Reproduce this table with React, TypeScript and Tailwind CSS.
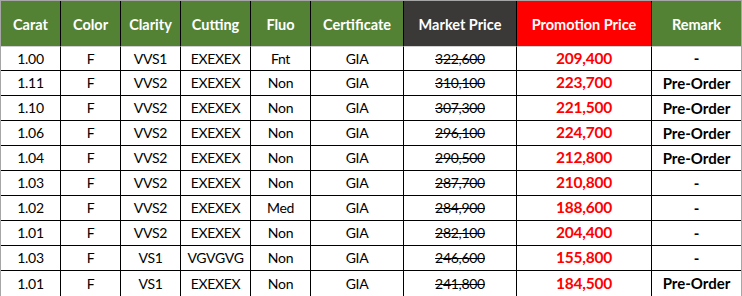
import React from "react";

const rows = [
  ["1.00", "F", "VVS1", "EXEXEX", "Fnt", "GIA", "322,600", "209,400", "-"],
  ["1.11", "F", "VVS2", "EXEXEX", "Non", "GIA", "310,100", "223,700", "Pre-Order"],
  ["1.10", "F", "VVS2", "EXEXEX", "Non", "GIA", "307,300", "221,500", "Pre-Order"],
  ["1.06", "F", "VVS2", "EXEXEX", "Non", "GIA", "296,100", "224,700", "Pre-Order"],
  ["1.04", "F", "VVS2", "EXEXEX", "Non", "GIA", "290,500", "212,800", "Pre-Order"],
  ["1.03", "F", "VVS2", "EXEXEX", "Non", "GIA", "287,700", "210,800", "-"],
  ["1.02", "F", "VVS2", "EXEXEX", "Med", "GIA", "284,900", "188,600", "-"],
  ["1.01", "F", "VVS2", "EXEXEX", "Non", "GIA", "282,100", "204,400", "-"],
  ["1.03", "F", "VS1", "VGVGVG", "Non", "GIA", "246,600", "155,800", "-"],
  ["1.01", "F", "VS1", "EXEXEX", "Non", "GIA", "241,800", "184,500", "Pre-Order"],
];

const headers = [
  "Carat",
  "Color",
  "Clarity",
  "Cutting",
  "Fluo",
  "Certificate",
  "Market Price",
  "Promotion Price",
  "Remark",
];

const headerBg = [
  "bg-[#548235]",
  "bg-[#548235]",
  "bg-[#548235]",
  "bg-[#548235]",
  "bg-[#548235]",
  "bg-[#548235]",
  "bg-[#3b3838]",
  "bg-[#ff0000]",
  "bg-[#548235]",
];

export default function App() {
  return (
    <div className="w-[742px] h-[296px] bg-white font-['Lato','Liberation_Sans',sans-serif]">
      <div className="border border-[#a6a6a6] grid grid-cols-[60px_60px_60px_70px_60px_93px_113px_135px_89px] grid-rows-[45px_repeat(10,25px)]">
        {headers.map((h, i) => (
          <div
            key={h}
            className={`${headerBg[i]} ${i < 8 ? "border-r border-black" : ""} flex items-center justify-center pt-[3px] text-white font-bold text-[14.5px] leading-none`}
          >
            {h}
          </div>
        ))}
        {rows.map((r, ri) =>
          r.map((c, ci) => {
            const last = ri === rows.length - 1;
            const base = `${ci < 8 ? "border-r border-black" : ""} ${last ? "" : "border-b border-black"} ${ri === 0 ? "border-t border-t-[#d0d0d0]" : ""} flex items-center justify-center leading-none`;
            if (ci === 6) {
              return (
                <div key={ci} className={`${base} text-[14px] tracking-[-0.3px] text-black line-through`}>
                  {c}
                </div>
              );
            }
            if (ci === 7) {
              return (
                <div key={ci} className={`${base} text-[15.5px] tracking-[-0.2px] font-bold text-[#ff0000]`}>
                  {c}
                </div>
              );
            }
            if (ci === 8) {
              return (
                <div key={ci} className={`${base} text-[15px] font-bold text-black`}>
                  {c}
                </div>
              );
            }
            return (
              <div key={ci} className={`${base} text-[14px] tracking-[-0.3px] text-black`}>
                {c}
              </div>
            );
          })
        )}
      </div>
    </div>
  );
}
